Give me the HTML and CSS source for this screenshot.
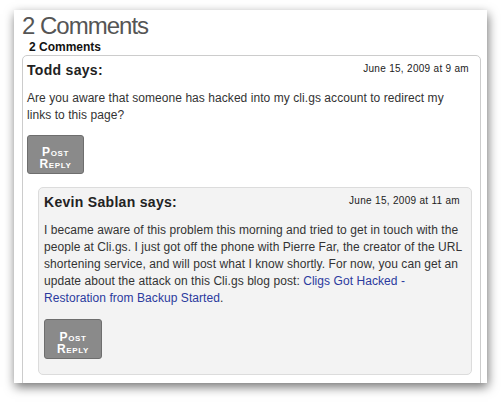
FILE: index.html
```html
<!DOCTYPE html>
<html>
<head>
<meta charset="utf-8">
<link rel="stylesheet" href="styles.css">
</head>
<body>
<div class="paper">
  <h1 class="title">2 Comments</h1>
  <h3 class="subtitle">2 Comments</h3>
  <div class="comment">
    <div class="meta">
      <span class="author">Todd says:</span>
      <span class="date">June 15, 2009 at 9 am</span>
    </div>
    <p class="text">Are you aware that someone has hacked into my cli.gs account to redirect my links to this page?</p>
    <div class="reply">Post<br>Reply</div>
    <div class="comment child">
      <div class="meta">
        <span class="author">Kevin Sablan says:</span>
        <span class="date">June 15, 2009 at 11 am</span>
      </div>
      <p class="text">I became aware of this problem this morning and tried to get in touch with the people at Cli.gs. I just got off the phone with Pierre Far, the creator of the URL shortening service, and will post what I know shortly. For now, you can get an update about the attack on this Cli.gs blog post: <a class="link" href="#">Cligs Got Hacked - Restoration from Backup Started</a>.</p>
      <div class="reply">Post<br>Reply</div>
    </div>
  </div>
</div>
</body>
</html>
```
FILE: styles.css
```css
html, body {
  margin: 0;
  padding: 0;
  background: #ffffff;
}
body {
  font-family: "Liberation Sans", Arial, sans-serif;
  width: 501px;
  height: 402px;
  overflow: hidden;
}
.paper {
  margin: 10px 0 0 14px;
  width: 473px;
  height: 373px;
  overflow: hidden;
  background: #ffffff;
  box-shadow: 1px 4px 10px rgba(0, 0, 0, 0.55);
  padding: 3px 0 0 8px;
  box-sizing: border-box;
}
.title {
  margin: 0;
  font-size: 24px;
  line-height: 26px;
  font-weight: normal;
  letter-spacing: -1px;
  color: #555555;
}
.subtitle {
  margin: 1px 0 1px 7px;
  font-size: 12px;
  line-height: 14px;
  font-weight: bold;
  color: #111111;
}
.comment {
  border: 1px solid #cccccc;
  border-radius: 5px;
  width: 459px;
  box-sizing: border-box;
  padding: 5px 8px 20px 4px;
}
.comment > .meta,
.comment > .text {
  margin-right: 3px;
}
.comment.child {
  width: auto;
  margin: 13px 0 0 11px;
  background: #f3f3f3;
  border-color: #dcdcdc;
  padding: 5px 8px 15px 5px;
}
.child > .text {
  margin-right: 0;
}
.meta {
  display: flex;
  justify-content: space-between;
  align-items: flex-start;
}
.author {
  font-size: 14px;
  line-height: 18px;
  font-weight: bold;
  color: #222222;
  letter-spacing: 0.3px;
}
.date {
  font-size: 10px;
  line-height: 12px;
  letter-spacing: 0.3px;
  color: #222222;
  margin-top: 2px;
}
.text {
  margin: 11px 0 11px 0;
  font-size: 12px;
  line-height: 17px;
  letter-spacing: 0.06px;
  color: #333333;
}
.child > .text {
  margin-bottom: 12px;
}
.link {
  color: #2b3a9e;
  text-decoration: none;
}
.reply {
  width: 57px;
  height: 39px;
  box-sizing: border-box;
  padding-top: 10px;
  background: #8a8a8a;
  border: 1px solid #6e6e6e;
  border-radius: 3px;
  color: #ffffff;
  font-size: 12px;
  line-height: 12px;
  font-weight: bold;
  font-variant: small-caps;
  letter-spacing: 0.6px;
  text-align: center;
}
.child .reply {
  width: 58px;
  height: 40px;
  padding-top: 11px;
}
```
